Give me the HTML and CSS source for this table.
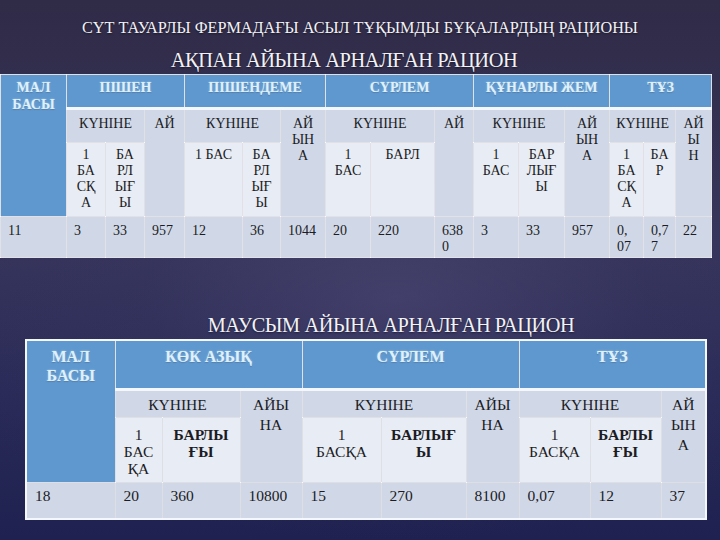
FILE: index.html
```html
<!DOCTYPE html>
<html lang="kk">
<head>
<meta charset="utf-8">
<title>Рацион</title>
<link rel="stylesheet" href="styles.css">
</head>
<body>
<div class="slide">
  <h1 class="title">СҮТ ТАУАРЛЫ ФЕРМАДАҒЫ АСЫЛ ТҰҚЫМДЫ БҰҚАЛАРДЫҢ РАЦИОНЫ</h1>
  <h2 class="subtitle sub-feb">АҚПАН АЙЫНА АРНАЛҒАН РАЦИОН</h2>
  <table class="grid t1">
    <colgroup>
      <col style="width:66px"><col style="width:39px"><col style="width:39px"><col style="width:40px">
      <col style="width:58px"><col style="width:38px"><col style="width:45px">
      <col style="width:45px"><col style="width:64px"><col style="width:39px">
      <col style="width:45px"><col style="width:46px"><col style="width:45px">
      <col style="width:34px"><col style="width:32px"><col style="width:36px">
    </colgroup>
    <tr class="r-head">
      <th rowspan="3" class="mal">МАЛ<br>БАСЫ</th>
      <th colspan="3">ПІШЕН</th>
      <th colspan="3">ПІШЕНДЕМЕ</th>
      <th colspan="3">СҮРЛЕМ</th>
      <th colspan="3">ҚҰНАРЛЫ ЖЕМ</th>
      <th colspan="3">ТҰЗ</th>
    </tr>
    <tr class="r-day">
      <td colspan="2" class="c">КҮНІНЕ</td><td rowspan="2" class="c month">АЙ</td>
      <td colspan="2" class="c">КҮНІНЕ</td><td rowspan="2" class="c month">АЙ<br>ЫН<br>А</td>
      <td colspan="2" class="c">КҮНІНЕ</td><td rowspan="2" class="c month">АЙ</td>
      <td colspan="2" class="c">КҮНІНЕ</td><td rowspan="2" class="c month">АЙ<br>ЫН<br>А</td>
      <td colspan="2" class="c">КҮНІНЕ</td><td rowspan="2" class="c month">АЙ<br>Ы<br>Н</td>
    </tr>
    <tr class="r-sub">
      <td class="c">1<br>БА<br>СҚ<br>А</td><td class="c">БА<br>РЛ<br>ЫҒ<br>Ы</td>
      <td class="c">1 БАС</td><td class="c">БА<br>РЛ<br>ЫҒ<br>Ы</td>
      <td class="c">1<br>БАС</td><td class="c">БАРЛ</td>
      <td class="c">1<br>БАС</td><td class="c">БАР<br>ЛЫҒ<br>Ы</td>
      <td class="c">1<br>БА<br>СҚ<br>А</td><td class="c">БА<br>Р</td>
    </tr>
    <tr class="r-data">
      <td>11</td><td>3</td><td>33</td><td>957</td><td>12</td><td>36</td><td>1044</td><td>20</td><td>220</td><td>638<br>0</td><td>3</td><td>33</td><td>957</td><td>0,<br>07</td><td>0,7<br>7</td><td>22</td>
    </tr>
  </table>

  <h2 class="subtitle sub-jun">МАУСЫМ АЙЫНА АРНАЛҒАН РАЦИОН</h2>
  <table class="grid t2">
    <colgroup>
      <col style="width:89px"><col style="width:47px"><col style="width:78px"><col style="width:62px">
      <col style="width:79px"><col style="width:85px"><col style="width:53px">
      <col style="width:71px"><col style="width:71px"><col style="width:45px">
    </colgroup>
    <tr class="r-head">
      <th rowspan="3" class="mal">МАЛ<br>БАСЫ</th>
      <th colspan="3">КӨК АЗЫҚ</th>
      <th colspan="3">СҮРЛЕМ</th>
      <th colspan="3">ТҰЗ</th>
    </tr>
    <tr class="r-day">
      <td colspan="2" class="c">КҮНІНЕ</td><td rowspan="2" class="c month">АЙЫ<br>НА</td>
      <td colspan="2" class="c">КҮНІНЕ</td><td rowspan="2" class="c month">АЙЫ<br>НА</td>
      <td colspan="2" class="c">КҮНІНЕ</td><td rowspan="2" class="c month">АЙ<br>ЫН<br>А</td>
    </tr>
    <tr class="r-sub">
      <td class="c">1<br>БАС<br>ҚА</td><td class="c b">БАРЛЫ<br>ҒЫ</td>
      <td class="c">1<br>БАСҚА</td><td class="c b">БАРЛЫҒ<br>Ы</td>
      <td class="c">1<br>БАСҚА</td><td class="c b">БАРЛЫ<br>ҒЫ</td>
    </tr>
    <tr class="r-data">
      <td>18</td><td>20</td><td>360</td><td>10800</td><td>15</td><td>270</td><td>8100</td><td>0,07</td><td>12</td><td>37</td>
    </tr>
  </table>
</div>
</body>
</html>
```
FILE: styles.css
```css
html, body {
  margin: 0;
  padding: 0;
}
body {
  width: 720px;
  height: 540px;
  overflow: hidden;
  font-family: "Liberation Serif", "Times New Roman", "DejaVu Serif", serif;
}
.slide {
  width: 720px;
  height: 540px;
  display: flex;
  flex-direction: column;
  align-items: flex-start;
  background:
    radial-gradient(ellipse 70% 45% at 55% 55%, rgba(80, 76, 120, 0.55) 0%, rgba(60, 58, 100, 0.25) 50%, rgba(0, 0, 0, 0) 100%),
    linear-gradient(180deg, #302b47 0%, #36345a 45%, #2a2b58 70%, #1f2150 100%);
}
.title {
  align-self: stretch;
  margin: 18px 0 0 0;
  font-size: 16.2px;
  line-height: 20px;
  font-weight: normal;
  text-align: center;
  color: #f2f2f6;
  text-shadow: 0 1px 2px rgba(0, 0, 0, 0.5);
}
.subtitle {
  align-self: stretch;
  font-weight: normal;
  text-align: center;
  color: #f2f2f6;
  letter-spacing: -0.4px;
  text-shadow: 0 1px 2px rgba(0, 0, 0, 0.5);
}
.sub-feb {
  margin: 10px 0 0 0;
  font-size: 20.4px;
  line-height: 24px;
  padding-right: 32px;
}
.sub-jun {
  margin: 54px 0 0 0;
  font-size: 20.3px;
  line-height: 26px;
  padding-left: 62px;
}
.grid {
  border-collapse: collapse;
  table-layout: fixed;
  color: #1c1c24;
}
.grid th, .grid td {
  border: 1px solid rgba(255, 255, 255, 0.85);
  padding: 0;
  vertical-align: top;
  white-space: nowrap;
  overflow: hidden;
}
.grid th {
  background: #5f98cf;
  color: #dff0fb;
  font-weight: bold;
  text-align: center;
  text-shadow: 0 0 2px rgba(170, 215, 245, 0.9), 0 1px 1px rgba(40, 70, 110, 0.6);
  border-bottom: 3px solid #f4f7fb;
}
.grid .r-head th.mal {
  border-bottom: 1px solid rgba(255, 255, 255, 0.85);
}
.grid td {
  background: #d0d8e8;
  text-align: left;
}
.grid .r-sub td {
  background: #e8ecf4;
}
.grid td.month {
  background: #d0d8e8;
}
.grid td.c {
  text-align: center;
}
.grid td.b {
  font-weight: bold;
}

/* February table */
.t1 {
  width: 711px;
  margin-top: 2px;
  font-size: 14px;
  line-height: 16px;
}
.t1 .r-head { height: 34px; }
.t1 .r-day { height: 34px; }
.t1 .r-sub { height: 74px; }
.t1 .r-data { height: 41px; }
.t1 th {
  font-size: 14px;
  line-height: 17px;
  padding-top: 4px;
}
.t1 .r-day td { padding-top: 6px; }
.t1 .r-sub td { padding-top: 4px; }
.t1 .r-data td { padding: 6px 0 0 7px; }

/* June table */
.t2 {
  width: 680px;
  margin: 1px 0 0 25px;
  font-size: 15.5px;
  line-height: 17px;
  border: 2px solid #f4f7fb;
}
.t2 .r-head { height: 49px; }
.t2 .r-day { height: 28px; }
.t2 .r-sub { height: 65px; }
.t2 .r-data { height: 37px; }
.t2 th {
  font-size: 16px;
  line-height: 19px;
  padding-top: 6px;
}
.t2 .r-day td { padding-top: 5px; line-height: 18px; }
.t2 .r-day td.month { line-height: 20px; padding-top: 4px; }
.t2 .r-sub td { padding-top: 8px; }
.t2 .r-data td { padding: 4px 0 0 8px; line-height: 18px; }
```
